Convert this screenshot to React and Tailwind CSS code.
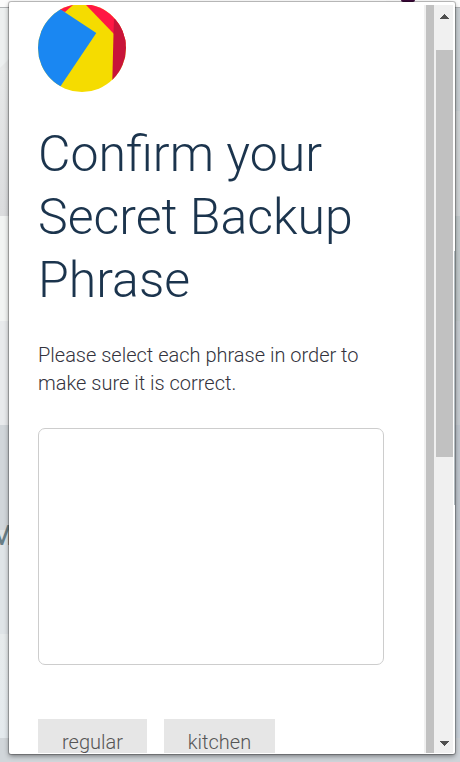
import React from "react";

function Backdrop() {
  return (
    <div className="absolute inset-0 flex flex-col overflow-hidden bg-[#ced3d7]">
      <div className="h-2 shrink-0 border-b border-[#b0b3b5] bg-[#fcfcfc]" />
      <div className="flex flex-1 justify-between">
        <div className="flex w-[230px] flex-col">
          <svg width="230" height="60" viewBox="0 0 230 60" className="block shrink-0">
            <rect width="230" height="60" fill="#edf0f0" />
            <path d="M0 60L9 51H230V60Z" fill="#e6e8e8" />
          </svg>
          <div className="h-[148px] bg-gradient-to-b from-[#e7e9e9] to-[#dbdcde]" />
          <div className="h-[105px] bg-[#f2f4f3]" />
          <div className="h-[104px] bg-[#e8eaec]" />
          <div className="h-[105px] bg-[#d1d6da]" />
          <div className="h-[104px] bg-[#dfe4e7]" />
          <div className="h-[104px] bg-gradient-to-b from-[#e7ebec] to-[#e4eaee]" />
          <div className="flex-1 bg-[#d1d6da]" />
        </div>
        <div className="flex w-[230px] flex-col">
          <div className="h-[103px] bg-[#c9cfd3]" />
          <div className="h-[105px] bg-[#d0d4d6]" />
          <div className="h-[105px] bg-[#c2cacc]" />
          <div className="h-[104px] bg-[#c6ccd1]" />
          <div className="h-[105px] bg-[#bfc6ce]" />
          <div className="h-[104px] bg-[#cacfd7]" />
          <div className="h-[104px] bg-[#c8d0d9]" />
          <div className="flex-1 bg-[#ced3d8]" />
        </div>
      </div>
      <div className="absolute left-[386px] top-0 h-[7px] w-[65px] bg-[#fafafa]">
        <div className="ml-[15px] h-[2px] w-[14px] rounded-b-sm bg-[#3b0838]" />
      </div>
      <span className="absolute left-[-10px] top-[518px] text-[27px] font-medium leading-[36px] text-[#6a7f86]">M</span>
    </div>
  );
}

function Avatar() {
  return (
    <svg width="88" height="88" viewBox="0 0 88 88" className="block shrink-0">
      <defs>
        <clipPath id="disc">
          <circle cx="44" cy="43" r="44" />
        </clipPath>
      </defs>
      <g clipPath="url(#disc)">
        <rect width="88" height="88" fill="#f5dc00" />
        <path d="M48 0H88V40L75.5 28.5Z" fill="#ff1744" />
        <path d="M76 14L88 10V88H74L75.5 28.5Z" fill="#c81439" />
        <path d="M0 0H35L27 7L22 5Z" fill="#ff1744" />
        <path d="M0 -10.5L58.3 28L20 85L0 88Z" fill="#1a87f2" />
      </g>
    </svg>
  );
}

function Word({ children, className }) {
  return (
    <button className={`h-[47px] shrink-0 bg-[#e6e6e6] text-center text-[20px] font-light leading-[47px] text-[#555555] ${className}`}>
      {children}
    </button>
  );
}

function Scrollbar() {
  return (
    <div className="flex h-full w-[19px] shrink-0 flex-col bg-[#f0f0f0]">
      <svg width="19" height="45" viewBox="0 0 19 45" className="block shrink-0" shapeRendering="crispEdges">
        <path d="M6 14L10.5 9L15 14Z" fill="#505050" />
      </svg>
      <div className="ml-[2px] h-[407px] w-[17px] shrink-0 bg-[#c1c1c1]" />
      <div className="flex-1" />
      <svg width="19" height="17" viewBox="0 0 19 17" className="block shrink-0" shapeRendering="crispEdges">
        <path d="M6 5L10.5 10L15 5Z" fill="#505050" />
      </svg>
    </div>
  );
}

export default function App() {
  return (
    <div className="relative h-[762px] w-[460px] overflow-hidden font-['Roboto',sans-serif]">
      <Backdrop />
      <div className="relative ml-[9px] mt-[2px] flex h-[752px] w-[446px] flex-col rounded-[2px] bg-white pt-[3px] pb-px shadow-[0_0_0_1px_rgba(0,0,0,0.22),0_2px_5px_rgba(0,0,0,0.45)]">
        <div className="flex h-[748px]">
          <main className="flex w-[415px] shrink-0 flex-col overflow-hidden pl-[29px]">
            <Avatar />
            <h1 className="mt-[30px] text-[50px] font-light leading-[63px] text-[#1b344d]">
              Confirm your
              <br />
              Secret Backup
              <br />
              Phrase
            </h1>
            <p className="mt-[29px] text-[20px] font-light leading-[28px] text-[#33333d]">
              Please select each phrase in order to
              <br />
              make sure it is correct.
            </p>
            <div className="mt-[31px] h-[237px] w-[346px] shrink-0 rounded-[7px] border border-[#cdcdcd]" />
            <div className="mt-[54px] flex gap-[17px]">
              <Word className="w-[109px]">regular</Word>
              <Word className="w-[111px]">kitchen</Word>
            </div>
          </main>
          <div className="w-[10px] shrink-0 border-l-2 border-[#f0f0f0] bg-[#c1c1c1]" />
          <Scrollbar />
        </div>
        <div className="absolute left-[445px] top-[249px] h-[254px] w-px bg-[#b2bbc0]" />
      </div>
    </div>
  );
}
